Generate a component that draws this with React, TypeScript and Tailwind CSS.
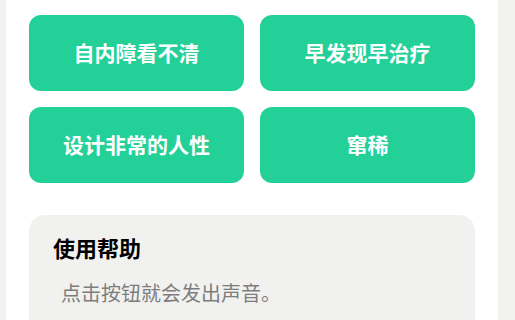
export default function App() {
  const buttons = ["自内障看不清", "早发现早治疗", "设计非常的人性", "窜稀"];
  return (
    <div
      className="min-h-[320px] w-[515px] bg-[#f2f2f1] overflow-hidden"
      style={{ fontFamily: '"Noto Sans CJK SC", "Noto Sans", sans-serif' }}
    >
      <div className="ml-[6px] w-[492px] min-h-[320px] bg-white pt-[15px] pl-[23px] pr-[23px]">
        <div className="grid grid-cols-2 gap-4">
          {buttons.map((b) => (
            <button
              key={b}
              className="h-[76px] rounded-[12px] bg-[#23d198] text-white text-[21px] font-semibold flex items-center justify-center"
            >
              {b}
            </button>
          ))}
        </div>
        <div className="mt-8 rounded-t-[16px] bg-[#f1f2f0] pl-6 pt-[17px] pb-6">
          <div className="text-[22px] leading-[30px] font-semibold text-black">使用帮助</div>
          <div className="mt-[17px] ml-2 text-[20px] leading-[28px] text-[#7d7d7d]">点击按钮就会发出声音。</div>
        </div>
      </div>
    </div>
  );
}
